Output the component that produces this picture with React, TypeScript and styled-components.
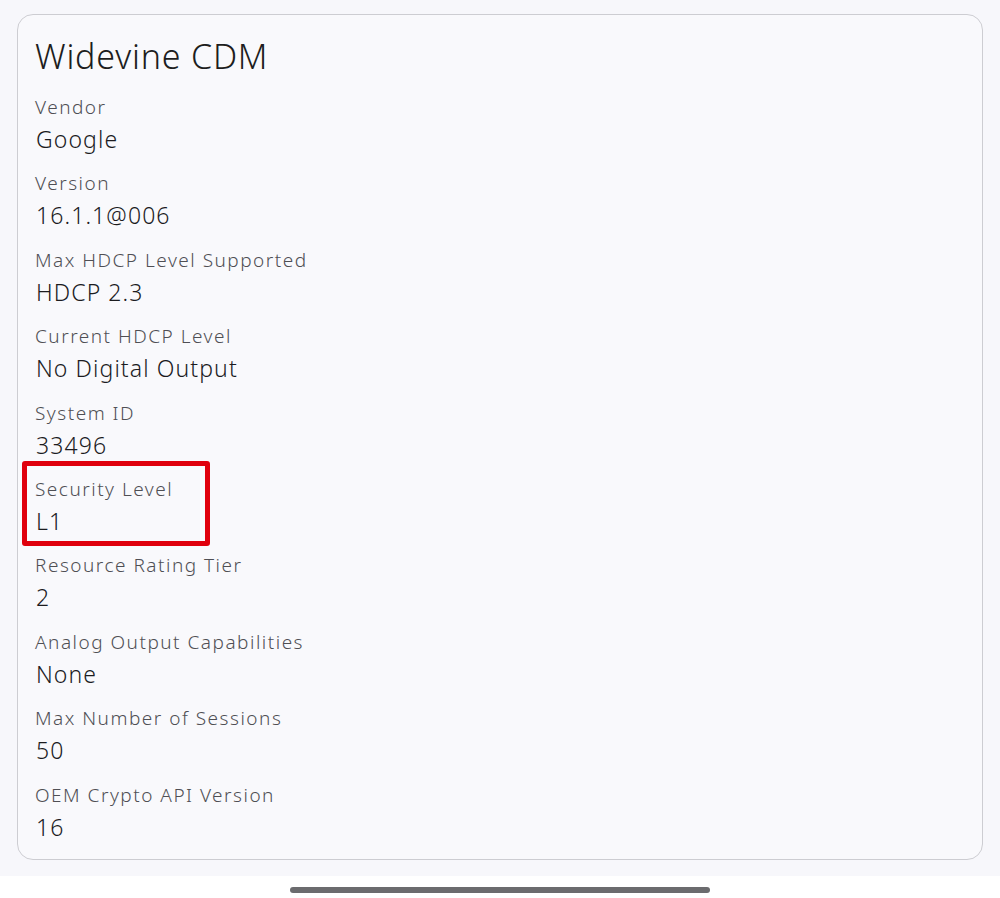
import React from "react";
import styled, { createGlobalStyle } from "styled-components";

const GlobalStyle = createGlobalStyle`
  html, body {
    margin: 0;
    padding: 0;
    background: #ffffff;
  }
  body {
    font-family: "Noto Sans", "Open Sans", sans-serif;
    -webkit-font-smoothing: antialiased;
  }
`;

const Screen = styled.div`
  width: 1000px;
  height: 898px;
  display: flex;
  flex-direction: column;
  background: #ffffff;
  overflow: hidden;
`;

const Content = styled.main`
  background: #f7f7fb;
  padding: 14px 17px 16px 17px;
`;

const Card = styled.section`
  background: #f9f9fc;
  border: 1px solid #cdcdd2;
  border-radius: 16px;
  padding: 19px 18px 14px 17px;
  height: 846px;
  box-sizing: border-box;
`;

const Title = styled.h1`
  margin: 0 0 15px 0;
  font-weight: 340;
  font-size: 34px;
  line-height: 44px;
  letter-spacing: 0.8px;
  color: #1d1d20;
`;

const List = styled.dl`
  margin: 0;
  display: flex;
  flex-direction: column;
  gap: 12.4px;
`;

const Item = styled.div`
  position: relative;
  display: flex;
  flex-direction: column;
`;

const Label = styled.dt`
  font-size: 19px;
  line-height: 28px;
  font-weight: 340;
  letter-spacing: 1.5px;
  color: #4f4f54;
`;

const Value = styled.dd`
  margin: 0 0 0 1px;
  font-size: 23px;
  line-height: 36px;
  font-weight: 340;
  letter-spacing: 1.1px;
  color: #1c1c1f;
`;

const Highlight = styled.span`
  position: absolute;
  left: -13px;
  top: -14px;
  width: 188px;
  height: 85px;
  box-sizing: border-box;
  border: 5px solid #e0000d;
  border-radius: 3px;
  pointer-events: none;
`;

const Footer = styled.footer`
  flex: 1;
  display: flex;
  align-items: center;
  justify-content: center;
  background: #ffffff;
`;

const HomeBar = styled.div`
  width: 420px;
  height: 6px;
  border-radius: 3px;
  background: #6b6b6e;
  margin-top: 6px;
`;

const items: { label: string; value: string; highlight?: boolean }[] = [
  { label: "Vendor", value: "Google" },
  { label: "Version", value: "16.1.1@006" },
  { label: "Max HDCP Level Supported", value: "HDCP 2.3" },
  { label: "Current HDCP Level", value: "No Digital Output" },
  { label: "System ID", value: "33496" },
  { label: "Security Level", value: "L1", highlight: true },
  { label: "Resource Rating Tier", value: "2" },
  { label: "Analog Output Capabilities", value: "None" },
  { label: "Max Number of Sessions", value: "50" },
  { label: "OEM Crypto API Version", value: "16" },
];

export default function App() {
  return (
    <>
      <GlobalStyle />
      <Screen>
        <Content>
          <Card>
            <Title>Widevine CDM</Title>
            <List>
              {items.map((it) => (
                <Item key={it.label}>
                  <Label>{it.label}</Label>
                  <Value>{it.value}</Value>
                  {it.highlight && <Highlight />}
                </Item>
              ))}
            </List>
          </Card>
        </Content>
        <Footer>
          <HomeBar />
        </Footer>
      </Screen>
    </>
  );
}
